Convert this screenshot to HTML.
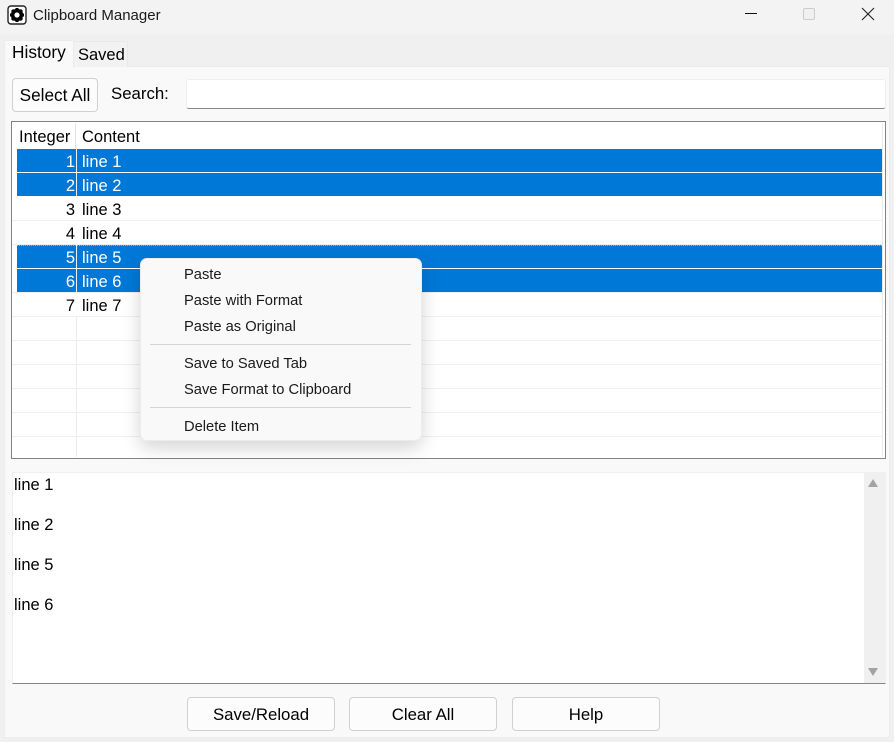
<!DOCTYPE html>
<html><head><meta charset="utf-8"><style>
html,body{margin:0;padding:0}
body{width:894px;height:742px;overflow:hidden;position:relative;background:#f3f3f3;font-family:"Liberation Sans",sans-serif;font-size:16.5px;color:#000}
div{position:absolute;box-sizing:border-box}
.t{white-space:nowrap;line-height:20px}
.btn{background:#fcfcfc;border:1px solid #d0d0d0;border-radius:4px;text-align:center;line-height:34px;font-size:16.8px}
.row{left:17px;width:865px;height:23px;line-height:26px}
.sel{background:#0078d7;color:#fff}
.n{position:absolute;right:807px;top:0}
.c{position:absolute;left:65px;top:0}
.g{height:1px;left:12px;width:871px;background:#efefef}
.m{left:184px;font-size:14.7px;color:#1a1a1a;white-space:nowrap;line-height:20px}
</style></head><body>
<div style="left:0;top:0;width:894px;height:38px;background:#f3f3f3"></div>
<div style="left:0;top:34px;width:894px;height:708px;background:#f0f0f0"></div>
<svg style="position:absolute;left:7px;top:5px" width="20" height="20" viewBox="0 0 20 20"><rect x="1" y="1" width="18" height="18" rx="3" fill="#fff" stroke="#222" stroke-width="1.4"/><circle cx="10" cy="10" r="4.4" fill="none" stroke="#000" stroke-width="3.6"/><g stroke="#000" stroke-width="3"><path d="M10 3V6M10 14v3M3 10H6M14 10h3M5 5l2.2 2.2M12.8 12.8L15 15M15 5l-2.2 2.2M7.2 12.8L5 15"/></g></svg>
<div class="t" style="left:33px;top:6px;font-size:15px;color:#1a1a1a">Clipboard Manager</div>
<div style="left:745px;top:13px;width:12px;height:1px;background:#111"></div>
<div style="left:803px;top:8px;width:12px;height:12px;border:1px solid #ccc;border-radius:2px;background:#f0f0f0"></div>
<svg style="position:absolute;left:861px;top:7px" width="14" height="14" viewBox="0 0 14 14"><path d="M1 1L13 13M13 1L1 13" stroke="#222" stroke-width="1.1" fill="none"/></svg>

<div style="left:4px;top:66px;width:886px;height:672px;background:#f9f9f9;border:1px solid #ececec"></div>
<div style="left:73px;top:41px;width:55px;height:26px;background:#f2f2f2;border:1px solid #e9e9e9;border-bottom:0"></div>
<div style="left:4px;top:40px;width:70px;height:28px;background:#f9f9f9;border:1px solid #ececec;border-bottom:0"></div>
<div class="t" style="left:12px;top:42px;font-size:17.3px">History</div>
<div class="t" style="left:78px;top:45px;font-size:16.5px">Saved</div>

<div class="btn" style="left:12px;top:78px;width:86px;height:34px;font-size:17.2px;line-height:32px">Select All</div>
<div class="t" style="left:111px;top:84px;font-size:16.8px">Search:</div>
<div style="left:186px;top:79px;width:700px;height:30px;background:#fff;border:1px solid #eee;border-bottom:1px solid #868686;border-radius:3px"></div>

<div style="left:11px;top:121px;width:875px;height:338px;background:#fff;border:1px solid #828282"></div>
<div style="left:75px;top:123px;width:1px;height:25px;background:#e5e5e5"></div>
<div style="left:76px;top:148px;width:1px;height:309px;background:#eaeaea"></div>
<div style="left:882px;top:123px;width:1px;height:334px;background:#eaeaea"></div>
<div class="t" style="left:19px;top:127px">Integer</div>
<div class="t" style="left:82px;top:127px">Content</div>
<div class="g" style="top:220px"></div><div class="g" style="top:244px"></div><div class="g" style="top:292px"></div><div class="g" style="top:316px"></div><div class="g" style="top:340px"></div><div class="g" style="top:364px"></div><div class="g" style="top:388px"></div><div class="g" style="top:412px"></div><div class="g" style="top:436px"></div>
<div class="row sel" style="top:149px"><span class="n">1</span><span class="c">line 1</span></div>
<div class="row sel" style="top:173px"><span class="n">2</span><span class="c">line 2</span></div>
<div class="row" style="top:197px"><span class="n">3</span><span class="c">line 3</span></div>
<div class="row" style="top:221px"><span class="n">4</span><span class="c">line 4</span></div>
<div class="row sel" style="top:245px;border-top:1px dotted #e8a060;line-height:24px"><span class="n">5</span><span class="c">line 5</span></div>
<div class="row sel" style="top:269px"><span class="n">6</span><span class="c">line 6</span></div>
<div class="row" style="top:293px"><span class="n">7</span><span class="c">line 7</span></div>
<div style="left:76px;top:149px;width:1px;height:168px;background:rgba(255,255,255,.9)"></div>

<div style="left:140px;top:258px;width:282px;height:183px;background:#f9f9f9;border:1px solid #ececec;border-radius:7px;box-shadow:0 7px 18px rgba(0,0,0,.17)"></div>
<div class="m" style="top:265px">Paste</div>
<div class="m" style="top:291px">Paste with Format</div>
<div class="m" style="top:317px">Paste as Original</div>
<div style="left:150px;top:344px;width:261px;height:1px;background:#d4d4d4"></div>
<div class="m" style="top:354px">Save to Saved Tab</div>
<div class="m" style="top:380px">Save Format to Clipboard</div>
<div style="left:150px;top:407px;width:261px;height:1px;background:#d4d4d4"></div>
<div class="m" style="top:417px">Delete Item</div>

<div style="left:12px;top:472px;width:874px;height:212px;background:#fff;border:1px solid #f0f0f0;border-bottom:1px solid #858585"></div>
<div style="left:864px;top:473px;width:21px;height:210px;background:#f0f0f0"></div>
<svg style="position:absolute;left:867px;top:478px" width="12" height="10"><path d="M1 9L6 1L11 9Z" fill="#a3a3a3"/></svg>
<svg style="position:absolute;left:867px;top:667px" width="12" height="10"><path d="M1 1L6 9L11 1Z" fill="#a3a3a3"/></svg>
<div class="t" style="left:14px;top:475px">line 1</div>
<div class="t" style="left:14px;top:515px">line 2</div>
<div class="t" style="left:14px;top:555px">line 5</div>
<div class="t" style="left:14px;top:595px">line 6</div>

<div class="btn" style="left:187px;top:697px;width:148px;height:34px">Save/Reload</div>
<div class="btn" style="left:349px;top:697px;width:148px;height:34px">Clear All</div>
<div class="btn" style="left:512px;top:697px;width:148px;height:34px">Help</div>
</body></html>
